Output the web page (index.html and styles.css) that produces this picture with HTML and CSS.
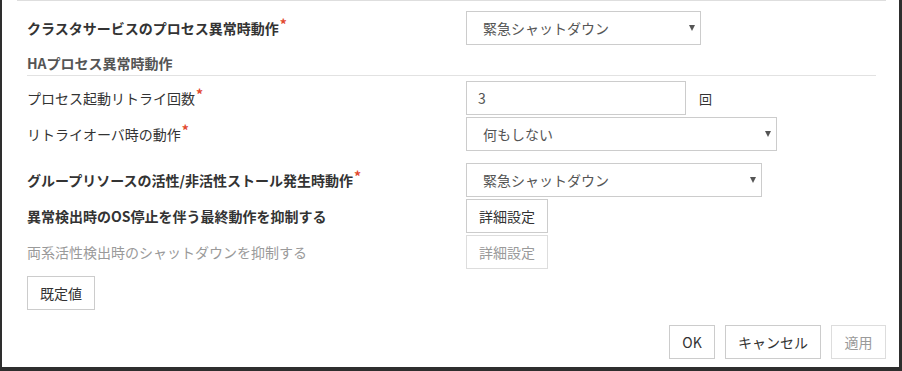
FILE: index.html
```html
<!DOCTYPE html>
<html lang="ja">
<head>
<meta charset="utf-8">
<title>設定</title>
<link rel="stylesheet" href="styles.css">
</head>
<body>
<div class="dialog">
  <div class="top-rule"></div>
  <div class="form">
    <div class="row row-first">
      <div class="label bold">クラスタサービスのプロセス異常時動作<span class="req">*</span></div>
      <div class="select w235"><span class="val">緊急シャットダウン</span><span class="caret"></span></div>
    </div>

    <div class="section-head">HAプロセス異常時動作</div>

    <div class="row row-input">
      <div class="label">プロセス起動リトライ回数<span class="req">*</span></div>
      <div class="ctrl">
        <div class="input w220">3</div>
        <span class="unit">回</span>
      </div>
    </div>
    <div class="row row-tight">
      <div class="label">リトライオーバ時の動作<span class="req">*</span></div>
      <div class="select w311"><span class="val">何もしない</span><span class="caret"></span></div>
    </div>

    <div class="row row-group">
      <div class="label bold">グループリソースの活性/非活性ストール発生時動作<span class="req">*</span></div>
      <div class="select w296"><span class="val">緊急シャットダウン</span><span class="caret"></span></div>
    </div>
    <div class="row row-tight">
      <div class="label bold">異常検出時のOS停止を伴う最終動作を抑制する</div>
      <div><button class="btn w82">詳細設定</button></div>
    </div>
    <div class="row row-tight">
      <div class="label disabled">両系活性検出時のシャットダウンを抑制する</div>
      <div><button class="btn w82 is-disabled">詳細設定</button></div>
    </div>

    <div class="defaults">
      <button class="btn w68">既定値</button>
    </div>
  </div>
  <div class="footer">
    <button class="btn w46">OK</button>
    <button class="btn w96">キャンセル</button>
    <button class="btn w55 is-disabled">適用</button>
  </div>
</div>
</body>
</html>
```
FILE: styles.css
```css
html, body {
  margin: 0;
  padding: 0;
  background: #ffffff;
}
body {
  font-family: "Noto Sans CJK JP", "Noto Sans", sans-serif;
  font-size: 14px;
  color: #333333;
}
.dialog {
  width: 902px;
  height: 371px;
  box-sizing: border-box;
  border-left: 2px solid #2e2e2e;
  border-right: 3px solid #2e2e2e;
  border-bottom: 4px solid #2e2e2e;
  background: #ffffff;
}
.top-rule {
  margin-left: 15px;
  width: 869px;
  height: 1px;
  background: #dedede;
}
.form {
  padding-left: 25px;
}
.row {
  display: grid;
  grid-template-columns: 439px auto;
  align-items: center;
  height: 34px;
}
.row-first { margin-top: 10px; }
.row-input { margin-top: 5px; }
.row-tight { margin-top: 2px; }
.row-group { margin-top: 12px; }
.label {
  line-height: 20px;
  white-space: nowrap;
  color: #333333;
}
.label.bold { font-weight: bold; }
.label.disabled { color: #9a9a9a; }
.req {
  color: #e2492f;
  font-size: 14px;
  font-weight: bold;
  vertical-align: 4px;
  margin-left: 1px;
  line-height: 0;
}
.section-head {
  margin-top: 8px;
  width: 849px;
  line-height: 20px;
  padding-bottom: 2px;
  border-bottom: 1px solid #e2e2e2;
  font-weight: bold;
  color: #555555;
}
.select, .input {
  box-sizing: border-box;
  height: 34px;
  border: 1px solid #cccccc;
  background: #ffffff;
  display: flex;
  align-items: center;
  color: #555555;
}
.select {
  padding-left: 16px;
  padding-right: 5px;
}
.input {
  padding-left: 11px;
}
.caret {
  margin-left: auto;
  width: 0;
  height: 0;
  border-left: 3px solid transparent;
  border-right: 3px solid transparent;
  border-top: 6px solid #555555;
}
.ctrl {
  display: flex;
  align-items: center;
}
.unit {
  margin-left: 13px;
  font-size: 13px;
  color: #333333;
}
.btn {
  box-sizing: border-box;
  height: 34px;
  padding: 0;
  border: 1px solid #cccccc;
  background: #ffffff;
  font-family: inherit;
  font-size: 14px;
  color: #333333;
  cursor: pointer;
}
.btn.is-disabled {
  color: #9a9a9a;
  border-color: #dddddd;
}
.w46 { width: 46px; }
.w55 { width: 55px; }
.w68 { width: 68px; }
.w82 { width: 82px; }
.w96 { width: 96px; }
.w220 { width: 220px; }
.w235 { width: 235px; }
.w296 { width: 296px; }
.w311 { width: 311px; }
.defaults {
  margin-top: 7px;
}
.footer {
  margin-top: 15px;
  padding-right: 13px;
  display: flex;
  justify-content: flex-end;
  gap: 10px;
}
```
